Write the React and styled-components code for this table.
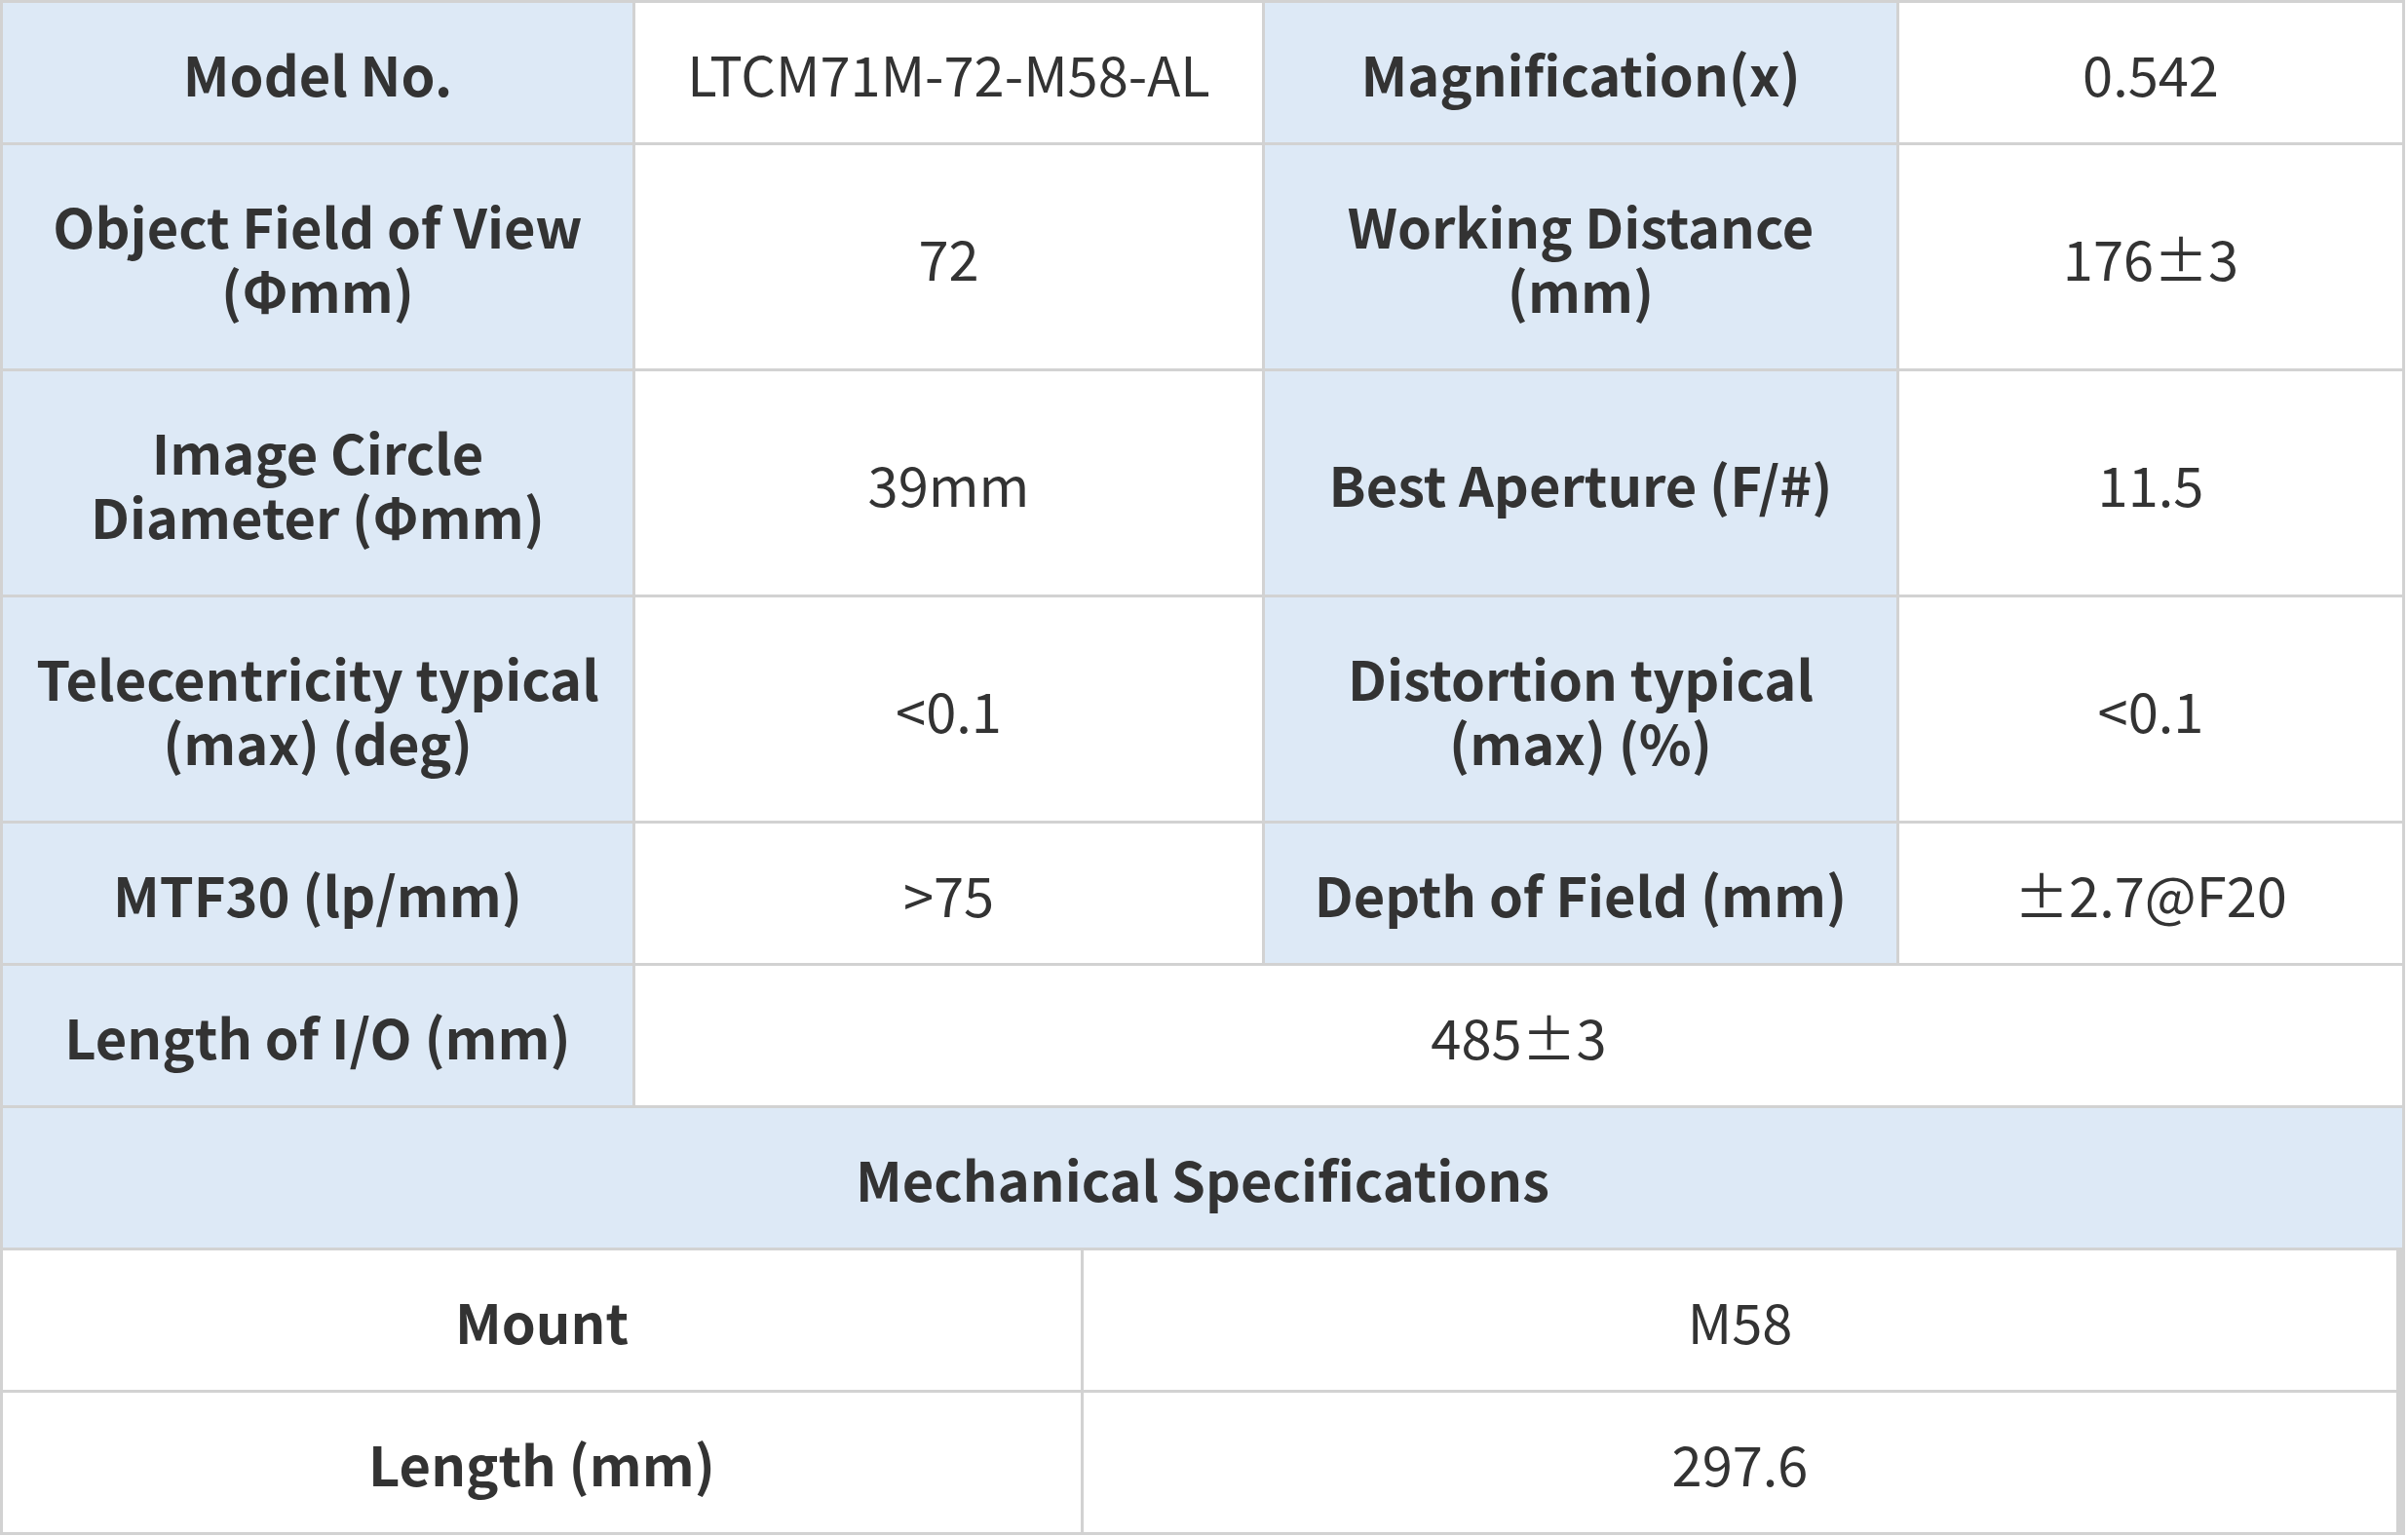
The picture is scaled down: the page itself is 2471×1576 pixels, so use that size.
import React from "react";
import styled, { createGlobalStyle, css } from "styled-components";

const GlobalStyle = createGlobalStyle`
  html, body {
    margin: 0;
    padding: 0;
    background: #ffffff;
  }
  body {
    font-family: "Noto Sans CJK SC", "Noto Sans", sans-serif;
    color: #333333;
  }
`;

const BORDER = "#d2d2d2";
const HEAD_BG = "#dde9f6";

const Table = styled.div`
  width: 2468px;
  box-sizing: border-box;
  background: ${BORDER};
  padding: 3px;
  display: flex;
  flex-direction: column;
  gap: 3px;
`;

const SpecGrid = styled.div`
  display: grid;
  grid-template-columns: 646px 643px 648px 516px;
  grid-template-rows: 143px 229px 229px 229px 143px 143px;
  gap: 3px;
`;

const MechGrid = styled.div`
  display: grid;
  grid-template-columns: 1106px 1347px;
  grid-auto-rows: 143px;
  gap: 3px;
`;

const Cell = styled.div`
  display: flex;
  align-items: center;
  justify-content: center;
  text-align: center;
  box-sizing: border-box;
  padding: 0 20px;
  font-size: 56px;
  line-height: 66px;
  font-weight: 400;
  background: #ffffff;
  white-space: pre-line;
  ${(p) =>
    p.$head &&
    css`
      background: ${HEAD_BG};
      font-weight: 700;
    `}
  ${(p) =>
    p.$span &&
    css`
      grid-column: span ${p.$span};
    `}
`;

const SectionTitle = styled(Cell)`
  height: 143px;
  background: ${HEAD_BG};
  font-weight: 700;
`;

const specRows = [
  ["Model No.", "LTCM71M-72-M58-AL", "Magnification(x)", "0.542"],
  ["Object Field of View\n(Φmm)", "72", "Working Distance\n(mm)", "176±3"],
  ["Image Circle\nDiameter (Φmm)", "39mm", "Best Aperture (F/#)", "11.5"],
  ["Telecentricity typical\n(max) (deg)", "<0.1", "Distortion typical\n(max) (%)", "<0.1"],
  ["MTF30 (lp/mm)", ">75", "Depth of Field (mm)", "±2.7@F20"],
];

const mechRows = [
  ["Mount", "M58"],
  ["Length (mm)", "297.6"],
];

export default function App() {
  return (
    <>
      <GlobalStyle />
      <Table>
        <SpecGrid>
          {specRows.map((row, i) => (
            <React.Fragment key={i}>
              <Cell $head>{row[0]}</Cell>
              <Cell>{row[1]}</Cell>
              <Cell $head>{row[2]}</Cell>
              <Cell>{row[3]}</Cell>
            </React.Fragment>
          ))}
          <Cell $head>Length of I/O (mm)</Cell>
          <Cell $span={3}>485±3</Cell>
        </SpecGrid>
        <SectionTitle>Mechanical Specifications</SectionTitle>
        <MechGrid>
          {mechRows.map((row, i) => (
            <React.Fragment key={i}>
              <Cell>
                <b>{row[0]}</b>
              </Cell>
              <Cell>{row[1]}</Cell>
            </React.Fragment>
          ))}
        </MechGrid>
      </Table>
    </>
  );
}
